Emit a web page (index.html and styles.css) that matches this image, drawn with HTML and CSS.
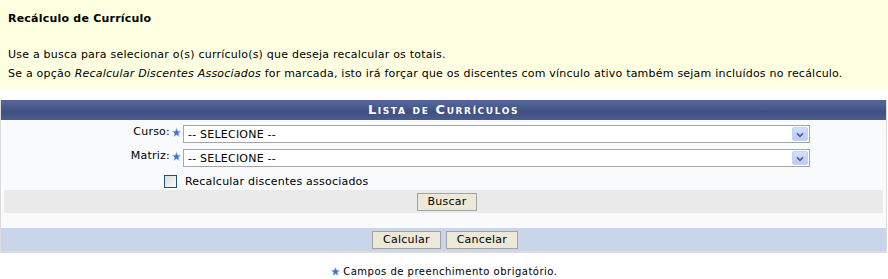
FILE: index.html
```html
<!DOCTYPE html>
<html lang="pt">
<head>
<meta charset="utf-8">
<title>Recálculo de Currículo</title>
<link rel="stylesheet" href="styles.css">
</head>
<body>
<div class="intro">
  <h2 class="intro-title">Recálculo de Currículo</h2>
  <p class="intro-text">Use a busca para selecionar o(s) currículo(s) que deseja recalcular os totais.<br>
  Se a opção <em>Recalcular Discentes Associados</em> for marcada, isto irá forçar que os discentes com vínculo ativo também sejam incluídos no recálculo.</p>
</div>

<div class="panel">
  <div class="panel-head">Lista de Currículos</div>
  <div class="panel-body">
    <div class="row">
      <div class="label">Curso:<svg class="star" viewBox="0 0 10 10" width="9" height="9"><polygon points="5,0.5 6.2,3.6 9.5,3.8 7,5.9 7.8,9.3 5,7.5 2.2,9.3 3,5.9 0.5,3.8 3.8,3.6" fill="#3a6fd0" stroke="#9ab8ee" stroke-width="0.6"/></svg></div>
      <div class="select"><span>-- SELECIONE --</span><span class="arrow"><svg viewBox="0 0 16 14" width="16" height="14"><polyline points="4.5,5 8,8.5 11.5,5" fill="none" stroke="#4d6185" stroke-width="2"/></svg></span></div>
    </div>
    <div class="row">
      <div class="label">Matriz:<svg class="star" viewBox="0 0 10 10" width="9" height="9"><polygon points="5,0.5 6.2,3.6 9.5,3.8 7,5.9 7.8,9.3 5,7.5 2.2,9.3 3,5.9 0.5,3.8 3.8,3.6" fill="#3a6fd0" stroke="#9ab8ee" stroke-width="0.6"/></svg></div>
      <div class="select"><span>-- SELECIONE --</span><span class="arrow"><svg viewBox="0 0 16 14" width="16" height="14"><polyline points="4.5,5 8,8.5 11.5,5" fill="none" stroke="#4d6185" stroke-width="2"/></svg></span></div>
    </div>
    <div class="row check-row">
      <div class="label"><span class="checkbox"></span></div>
      <div class="check-text">Recalcular discentes associados</div>
    </div>
    <div class="search-bar"><button class="btn">Buscar</button></div>
  </div>
  <div class="panel-foot">
    <button class="btn">Calcular</button>
    <button class="btn">Cancelar</button>
  </div>
</div>

<p class="required"><svg class="star" viewBox="0 0 10 10" width="9" height="9"><polygon points="5,0.5 6.2,3.6 9.5,3.8 7,5.9 7.8,9.3 5,7.5 2.2,9.3 3,5.9 0.5,3.8 3.8,3.6" fill="#3a6fd0" stroke="#9ab8ee" stroke-width="0.6"/></svg> Campos de preenchimento obrigatório.</p>
</body>
</html>
```

FILE: styles.css
```css
* { box-sizing: border-box; }
body {
  margin: 0;
  font-family: Verdana, "DejaVu Sans", sans-serif;
  font-size: 11px;
  letter-spacing: 0.22px;
  color: #000;
  background: #fff;
}
.intro {
  background: #ffffe1;
  height: 89px;
  padding: 12px 8px 0;
}
.intro-title {
  margin: 0;
  font-size: 11px;
  font-weight: bold;
  line-height: 14px;
}
.intro-text {
  margin: 19px 0 0;
  line-height: 19px;
}
.intro-text em { font-style: italic; }

.panel {
  margin-top: 11px;
  width: 887px;
  border-left: 1px solid #dcdcdc;
  border-right: 1px solid #dcdcdc;
  border-bottom: 2px solid #dcdcdc;
  background: #f9fafc;
}
.panel-head {
  height: 20px;
  line-height: 20px;
  text-align: center;
  color: #fff;
  font-weight: bold;
  font-variant: small-caps;
  font-size: 13px;
  letter-spacing: 1.6px;
  background: linear-gradient(#56679c 0%, #4a5b8e 35%, #3f4f81 60%, #4b5c8e 100%);
}
.panel-body {
  padding: 5px 3px 15px;
}
.row {
  display: grid;
  grid-template-columns: 179px 1fr;
  align-items: start;
  height: 24px;
}
.label {
  display: flex;
  justify-content: flex-end;
  align-items: center;
  padding-right: 2px;
  gap: 2px;
  line-height: 14px;
}
.star { display: inline-block; vertical-align: -1px; }
.select {
  width: 627px;
  height: 18px;
  border: 1px solid #a5a5a5;
  background: #fff;
  display: flex;
  align-items: center;
  justify-content: space-between;
  padding-left: 4px;
  font-size: 11px;
}
.arrow {
  width: 16px;
  height: 14px;
  margin-right: 1px;
  background: linear-gradient(#d3e0fb, #b7cbf6);
  border: 1px solid #c2d2f4;
  border-radius: 2px;
  display: flex;
}
.arrow svg { display: block; }
.check-row { height: 17px; align-items: center; }
.checkbox {
  display: inline-block;
  width: 13px;
  height: 13px;
  border: 1px solid #1c5180;
  background: linear-gradient(135deg, #dcdcd6, #fbfbf9);
  margin-right: 4px;
}
.check-text { padding-left: 2px; }
.search-bar {
  height: 23px;
  background: #eaeaea;
  display: flex;
  justify-content: center;
  align-items: center;
  padding-left: 7px;
}
.btn {
  font-family: Verdana, "DejaVu Sans", sans-serif;
  font-size: 11px;
  letter-spacing: 0.22px;
  height: 18px;
  padding: 0 10px;
  background: #ece9d8;
  border: 1px solid #a3a3a3;
  color: #000;
  line-height: 16px;
}
.panel-foot {
  height: 23px;
  background: #c8d5eb;
  display: flex;
  justify-content: center;
  align-items: center;
  gap: 5px;
  padding-left: 3px;
}
.required {
  margin: 13px 0 0;
  text-align: center;
  font-size: 10px;
  letter-spacing: 0.5px;
}
```
